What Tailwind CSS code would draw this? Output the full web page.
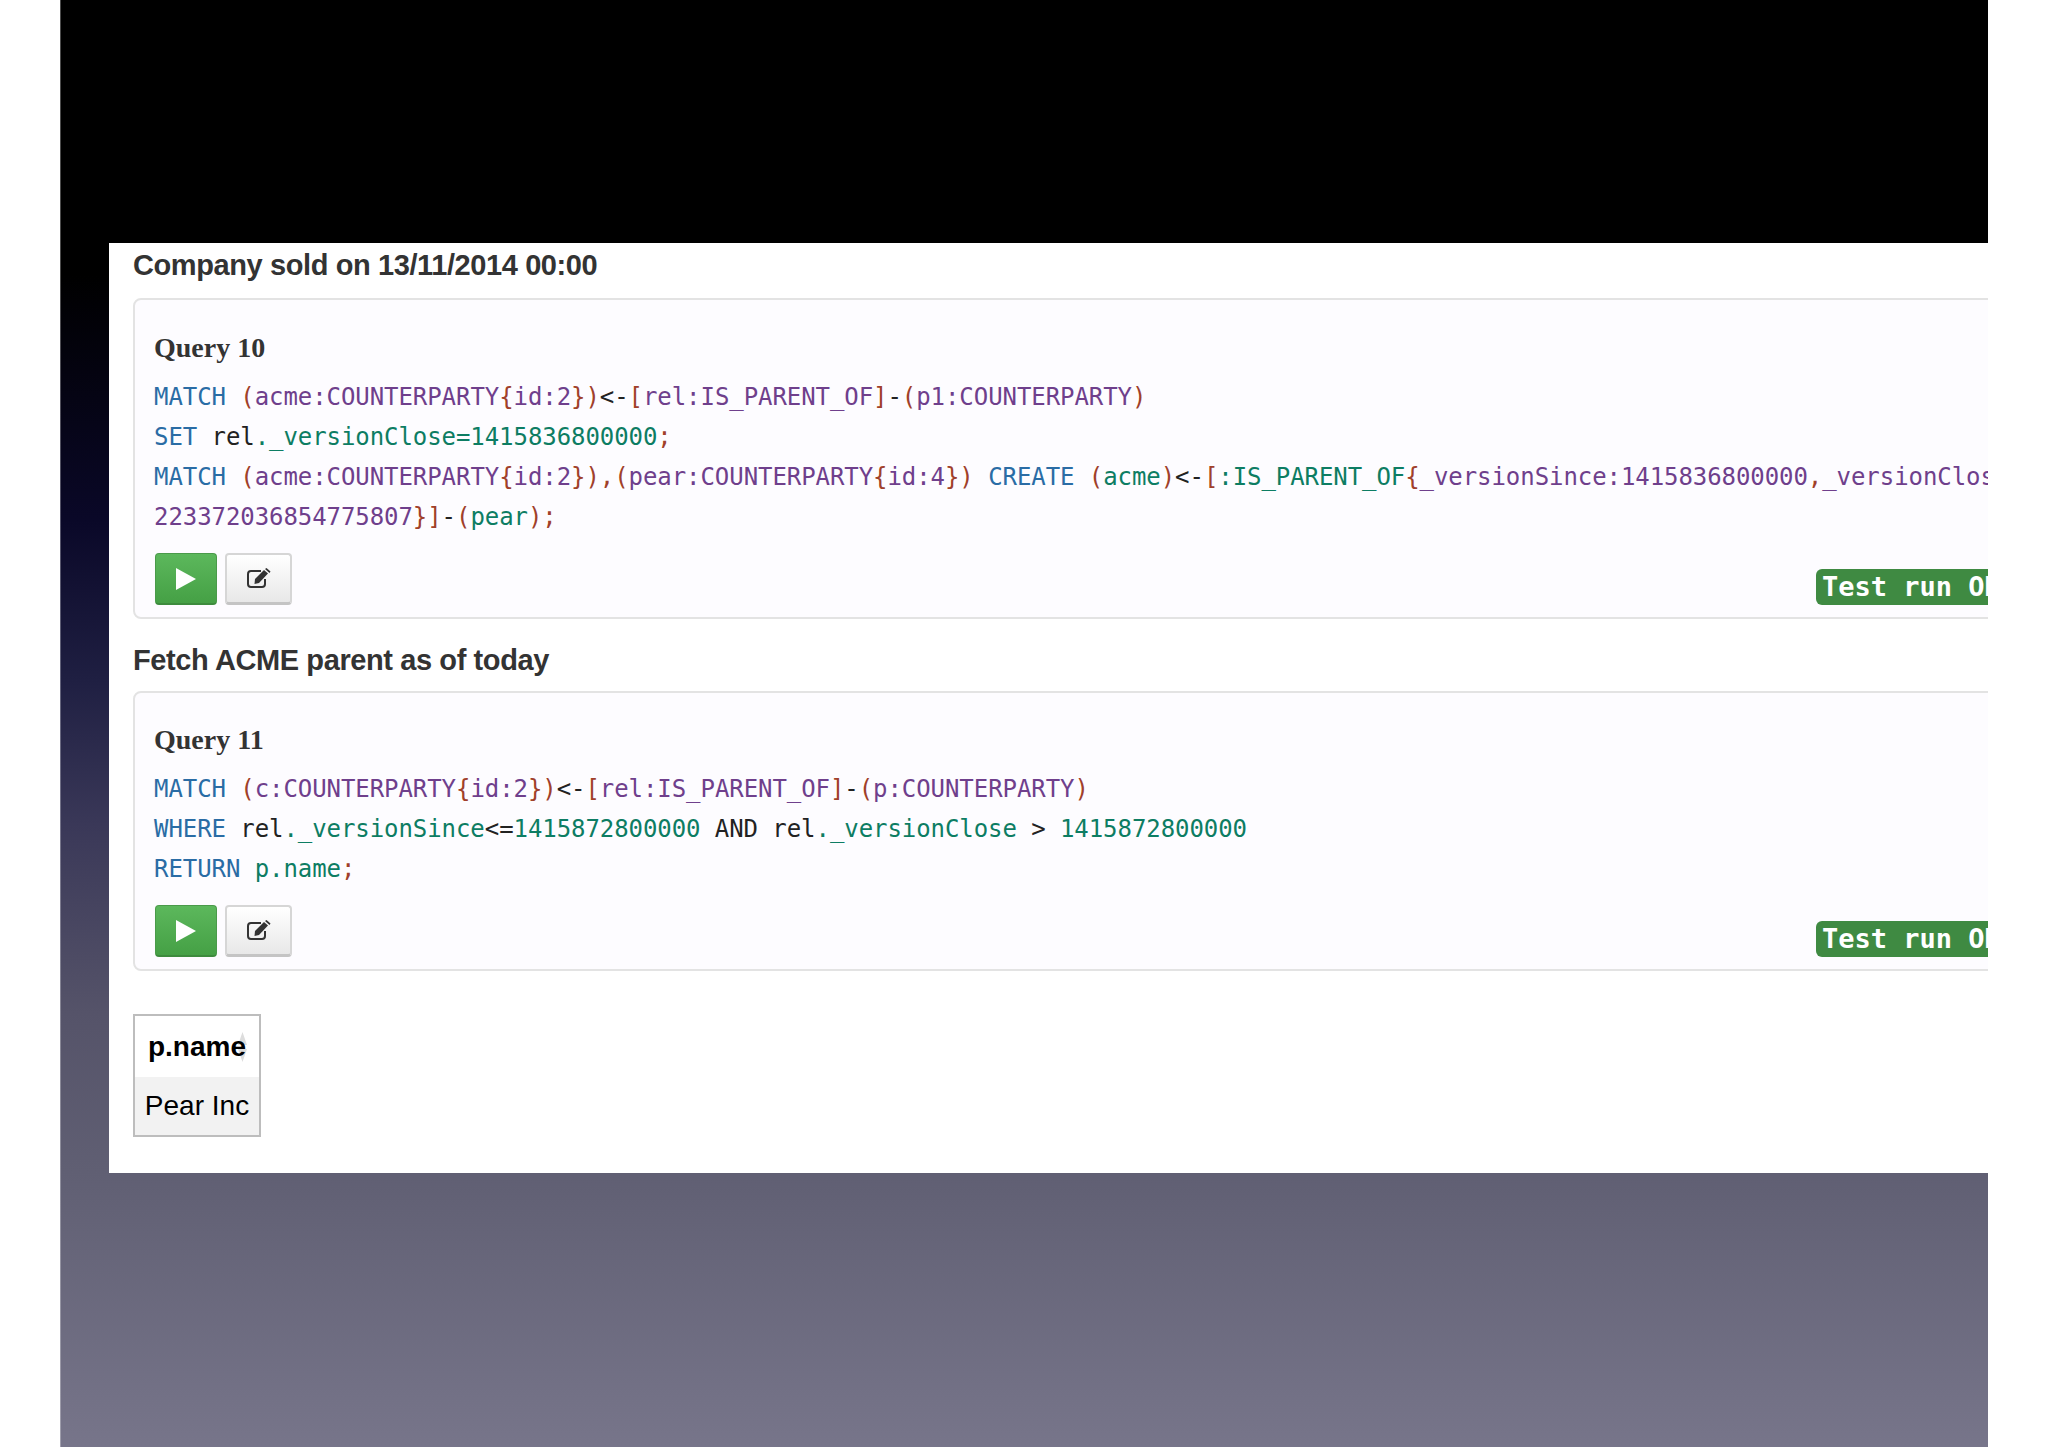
<!DOCTYPE html>
<html>
  <head>
    <title>Cypher queries</title>
    <script src="https://cdn.jsdelivr.net/npm/@tailwindcss/browser@4"></script>
  </head>
  <body class="h-screen bg-white overflow-hidden">
    <div class="ml-[60px] w-[1928px] h-[1447px] pt-[243px] pl-[48px] border-l border-white/30 bg-[linear-gradient(to_bottom,#000000_0%,#000000_19%,#0a0828_36%,#1f1f42_47%,#3a3858_57%,#555369_70%,#605f73_81%,#77758a_100%)]">
      <!-- Slide content, cut off on the right like the original -->
      <div class="h-[930px] bg-white overflow-hidden pl-[24px] pr-0 font-['Liberation_Sans',sans-serif]">
        <h2 class="h-[55px] leading-[45px] text-[29px] font-bold text-[#333] tracking-[-0.4px]">Company sold on 13/11/2014 00:00</h2>

        <div class="h-[321px] w-[1900px] bg-[#fdfcff] border-2 border-[#e3e3e3] rounded-[8px] pl-[19px] pt-[31px] font-['DejaVu_Sans_Mono',monospace] text-[24px] leading-[40px] whitespace-nowrap">
          <h3 class="h-[33px] leading-[33px] font-['Liberation_Serif',serif] font-bold text-[28px] text-[#333]">Query 10</h3>
          <div class="mt-[13px] tracking-[-0.07px]">
            <div><span class="text-[#2a6ca5]">MATCH</span> <span class="text-[#a0402a]">(</span><span class="text-[#6f3f8c]">acme:COUNTERPARTY</span><span class="text-[#a0402a]">{</span><span class="text-[#6f3f8c]">id:2</span><span class="text-[#a0402a]">})</span><span class="text-[#222]">&lt;-</span><span class="text-[#a0402a]">[</span><span class="text-[#6f3f8c]">rel:IS_PARENT_OF</span><span class="text-[#a0402a]">]</span><span class="text-[#222]">-</span><span class="text-[#a0402a]">(</span><span class="text-[#6f3f8c]">p1:COUNTERPARTY</span><span class="text-[#a0402a]">)</span></div>
            <div><span class="text-[#2a6ca5]">SET</span> <span class="text-[#222]">rel</span><span class="text-[#0d7d63]">._versionClose=1415836800000</span><span class="text-[#a0402a]">;</span></div>
            <div><span class="text-[#2a6ca5]">MATCH</span> <span class="text-[#a0402a]">(</span><span class="text-[#6f3f8c]">acme:COUNTERPARTY</span><span class="text-[#a0402a]">{</span><span class="text-[#6f3f8c]">id:2</span><span class="text-[#a0402a]">}),(</span><span class="text-[#6f3f8c]">pear:COUNTERPARTY</span><span class="text-[#a0402a]">{</span><span class="text-[#6f3f8c]">id:4</span><span class="text-[#a0402a]">})</span> <span class="text-[#2a6ca5]">CREATE</span> <span class="text-[#a0402a]">(</span><span class="text-[#0d7d63]">acme</span><span class="text-[#a0402a]">)</span><span class="text-[#222]">&lt;-</span><span class="text-[#a0402a]">[</span><span class="text-[#0d7d63]">:IS_PARENT_OF</span><span class="text-[#a0402a]">{</span><span class="text-[#6f3f8c]">_versionSince:1415836800000</span><span class="text-[#a0402a]">,</span><span class="text-[#6f3f8c]">_versionClose:9</span></div>
            <div><span class="text-[#6f3f8c]">223372036854775807</span><span class="text-[#a0402a]">}]</span><span class="text-[#222]">-</span><span class="text-[#a0402a]">(</span><span class="text-[#0d7d63]">pear</span><span class="text-[#a0402a]">);</span></div>
          </div>
          <div class="mt-[16px] ml-[1px] flex items-start">
            <button class="w-[62px] h-[52px] rounded-[4px] border border-[#4a9a4a] border-b-2 border-b-[#3d8b3d] bg-linear-to-b from-[#5cb85c] to-[#45a045] flex items-center justify-center">
              <svg width="20" height="22" viewBox="0 0 20 22"><path d="M0 0L20 11L0 22Z" fill="#fff"/></svg>
            </button>
            <button class="ml-[8px] w-[67px] h-[52px] rounded-[4px] border-2 border-[#d6d6d6] border-b-[3px] border-b-[#c4c4c4] bg-linear-to-b from-white to-[#e8e8e8] flex items-center justify-center">
              <svg width="25" height="21" viewBox="0 0 25 21" fill="none"><path d="M15 3H5a3 3 0 0 0-3 3v10a3 3 0 0 0 3 3h11a3 3 0 0 0 3-3v-5" stroke="#333" stroke-width="2"/><path d="M9 11L18 2l4 3.500-9 9.500-4.500 1z" fill="#333"/><path d="M19 1l1.500-1 4 3.500-1 1.500z" fill="#333"/></svg>
            </button>
            <div class="ml-auto mt-[16px] w-[215px] shrink-0 h-[36px] pl-[6px] rounded-l-[6px] bg-[#3f8a42] text-white font-bold text-[27px] leading-[36px] overflow-hidden">Test run OK</div>
          </div>
        </div>

        <h2 class="mt-[23px] h-[36px] leading-[36px] text-[29px] font-bold text-[#333] tracking-[-0.4px]">Fetch ACME parent as of today</h2>

        <div class="mt-[13px] h-[280px] w-[1900px] bg-[#fdfcff] border-2 border-[#e3e3e3] rounded-[8px] pl-[19px] pt-[30px] font-['DejaVu_Sans_Mono',monospace] text-[24px] leading-[40px] whitespace-nowrap">
          <h3 class="h-[33px] leading-[33px] font-['Liberation_Serif',serif] font-bold text-[28px] text-[#333]">Query 11</h3>
          <div class="mt-[13px] tracking-[-0.07px]">
            <div><span class="text-[#2a6ca5]">MATCH</span> <span class="text-[#a0402a]">(</span><span class="text-[#6f3f8c]">c:COUNTERPARTY</span><span class="text-[#a0402a]">{</span><span class="text-[#6f3f8c]">id:2</span><span class="text-[#a0402a]">})</span><span class="text-[#222]">&lt;-</span><span class="text-[#a0402a]">[</span><span class="text-[#6f3f8c]">rel:IS_PARENT_OF</span><span class="text-[#a0402a]">]</span><span class="text-[#222]">-</span><span class="text-[#a0402a]">(</span><span class="text-[#6f3f8c]">p:COUNTERPARTY</span><span class="text-[#a0402a]">)</span></div>
            <div><span class="text-[#2a6ca5]">WHERE</span> <span class="text-[#222]">rel</span><span class="text-[#0d7d63]">._versionSince</span><span class="text-[#222]">&lt;=</span><span class="text-[#0d7d63]">1415872800000</span> <span class="text-[#222]">AND rel</span><span class="text-[#0d7d63]">._versionClose</span> <span class="text-[#222]">&gt;</span> <span class="text-[#0d7d63]">1415872800000</span></div>
            <div><span class="text-[#2a6ca5]">RETURN</span> <span class="text-[#0d7d63]">p.name</span><span class="text-[#a0402a]">;</span></div>
          </div>
          <div class="mt-[16px] ml-[1px] flex items-start">
            <button class="w-[62px] h-[52px] rounded-[4px] border border-[#4a9a4a] border-b-2 border-b-[#3d8b3d] bg-linear-to-b from-[#5cb85c] to-[#45a045] flex items-center justify-center">
              <svg width="20" height="22" viewBox="0 0 20 22"><path d="M0 0L20 11L0 22Z" fill="#fff"/></svg>
            </button>
            <button class="ml-[8px] w-[67px] h-[52px] rounded-[4px] border-2 border-[#d6d6d6] border-b-[3px] border-b-[#c4c4c4] bg-linear-to-b from-white to-[#e8e8e8] flex items-center justify-center">
              <svg width="25" height="21" viewBox="0 0 25 21" fill="none"><path d="M15 3H5a3 3 0 0 0-3 3v10a3 3 0 0 0 3 3h11a3 3 0 0 0 3-3v-5" stroke="#333" stroke-width="2"/><path d="M9 11L18 2l4 3.500-9 9.500-4.500 1z" fill="#333"/><path d="M19 1l1.500-1 4 3.500-1 1.500z" fill="#333"/></svg>
            </button>
            <div class="ml-auto mt-[16px] w-[215px] shrink-0 h-[36px] pl-[6px] rounded-l-[6px] bg-[#3f8a42] text-white font-bold text-[27px] leading-[36px] overflow-hidden">Test run OK</div>
          </div>
        </div>

        <table class="mt-[43px] w-[128px] h-[123px] border-2 border-[#bdbdbd] border-separate border-spacing-0 text-black text-[28px]">
          <tr class="h-[61px]">
            <th class="relative p-0 font-bold text-center">
              <svg class="absolute right-[12px] top-[16px]" width="9" height="30" viewBox="0 0 9 30"><path d="M4.500 0L9 13H0zM4.500 30L0 17H9z" fill="#ddd"/></svg>
              <span class="relative">p.name</span>
            </th>
          </tr>
          <tr><td class="p-0 bg-[#f2f2f2] text-center">Pear Inc</td></tr>
        </table>
      </div>
    </div>
  </body>
</html>
